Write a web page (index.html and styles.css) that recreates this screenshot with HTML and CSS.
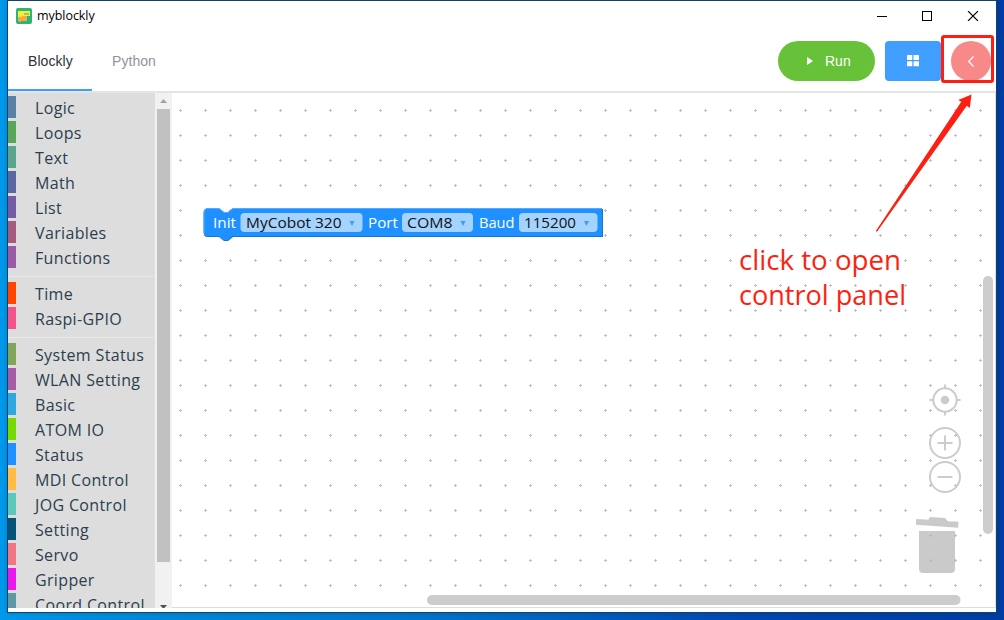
FILE: index.html
```html
<!DOCTYPE html>
<html lang="en">
<head>
<meta charset="utf-8">
<title>myblockly</title>
<link rel="stylesheet" href="styles.css">
</head>
<body>
<div class="desktop">
  <div class="window">
    <div class="titlebar">
      <svg class="app-icon" width="16" height="16" viewBox="0 0 16 16">
        <rect width="16" height="16" rx="2" fill="#2bb673"/>
        <path d="M2 8h9v5H5v1H3v-1H2z" fill="#f9a940"/>
        <path d="M2 3h12v5H7L5 9H2z" fill="#ffe936"/>
        <rect x="8" y="5" width="5" height="2" fill="#7cc8a0"/>
      </svg>
      <span class="app-name">myblockly</span>
      <svg class="controls" width="102" height="10" viewBox="0 0 102 10" fill="none" stroke="#000" shape-rendering="crispEdges">
        <path d="M0 5.5h10M45.500 .5h9v9h-9z"/>
        <path d="M91 0l10 10M101 0l-10 10" shape-rendering="auto" stroke-width="1.1"/>
      </svg>
    </div>
    <div class="header">
      <div class="tab tab-active">Blockly</div>
      <div class="tab">Python</div>
      <div class="actions">
        <div class="run"><svg width="6" height="8" viewBox="0 0 6 8"><path d="M0 0L6 4L0 8z" fill="#fff"/></svg><span>Run</span></div>
        <div class="grid-button"><svg width="12" height="12" viewBox="0 0 12 12" fill="#fff"><rect y="0" width="5.300" height="5" rx=".5"/><rect x="6.500" width="5.500" height="5" rx=".5"/><rect y="6.200" width="5.300" height="5" rx=".5"/><rect x="6.500" y="6.200" width="5.500" height="5" rx=".5"/></svg></div>
        <div class="panel-button"><svg width="6" height="11" viewBox="0 0 6 11"><path d="M5.500 .5L.7 5.500l4.800 5" fill="none" stroke="#fff" stroke-width="1.200"/></svg></div>
      </div>
    </div>
    <div class="main">
      <div class="toolbox">
        <div class="category logic">Logic</div>
        <div class="category loops">Loops</div>
        <div class="category text">Text</div>
        <div class="category math">Math</div>
        <div class="category list">List</div>
        <div class="category variables">Variables</div>
        <div class="category functions">Functions</div>
        <div class="separator"></div>
        <div class="category time">Time</div>
        <div class="category gpio">Raspi-GPIO</div>
        <div class="separator"></div>
        <div class="category system">System Status</div>
        <div class="category wlan">WLAN Setting</div>
        <div class="category basic">Basic</div>
        <div class="category atom">ATOM IO</div>
        <div class="category status">Status</div>
        <div class="category mdi">MDI Control</div>
        <div class="category jog">JOG Control</div>
        <div class="category setting">Setting</div>
        <div class="category servo">Servo</div>
        <div class="category gripper">Gripper</div>
        <div class="category coord">Coord Control</div>
      </div>
      <div class="scrollbar">
        <svg width="7" height="4" viewBox="0 0 7 4"><path d="M0 4L3.500 0L7 4z" fill="#a3a3a3"/></svg>
        <div class="thumb"></div>
        <svg class="down" width="7" height="4" viewBox="0 0 7 4"><path d="M0 0h7L3.500 4z" fill="#505050"/></svg>
      </div>
      <svg class="workspace" width="824" height="515" viewBox="172 93 824 515">
        <defs>
          <pattern id="dots" x="168" y="98" width="25" height="25" patternUnits="userSpaceOnUse">
            <path d="M11 12.500h3M12.500 11v3" stroke="#c0c0c0"/>
          </pattern>
        </defs>
        <rect x="172" y="93" width="823" height="514" fill="url(#dots)"/>
        <path d="M995.500 93v514.500H172" fill="none" stroke="#ddd"/>
        <g class="block">
          <path d="M204 213q0-4 4-4h11l5 4h4l5-4h370v28H233l-5 4h-4l-5-4h-11q-4 0-4-4z" fill="#1a73cc"/>
          <path d="M203.500 213q0-5 5-5H219l5 4h4l5-4h369v28H232.500l-5 4h-4l-5-4h-10.500q-4.500 0-4.500-4z" fill="#1e90ff"/>
          <path d="M204 233v-20q0-4.500 4.500-4.500h10.500l5 4h4l5-4h369" fill="none" stroke="#55abff"/>
          <g fill="#a5d3ff">
            <rect x="240.500" y="213" width="122" height="19" rx="4"/>
            <rect x="402" y="213" width="71" height="19" rx="4"/>
            <rect x="519" y="213" width="78.500" height="19" rx="4"/>
          </g>
          <g fill="#fff">
            <text x="213" y="228" textLength="23" lengthAdjust="spacingAndGlyphs">Init</text>
            <text x="368" y="228" textLength="30" lengthAdjust="spacingAndGlyphs">Port</text>
            <text x="479" y="228" textLength="35.500" lengthAdjust="spacingAndGlyphs">Baud</text>
          </g>
          <g fill="#111">
            <text x="246" y="228" textLength="95.500" lengthAdjust="spacingAndGlyphs">MyCobot 320</text>
            <text x="407" y="228" textLength="45.500" lengthAdjust="spacingAndGlyphs">COM8</text>
            <text x="524" y="228" textLength="52" lengthAdjust="spacingAndGlyphs">115200</text>
          </g>
          <path d="M349.500 221h5l-2.500 5zM460.500 221h5l-2.500 5zM584 221h5l-2.500 5z" fill="#3f9df5"/>
        </g>
        <g fill="none" stroke="#ccc" stroke-width="2">
          <circle cx="945" cy="400" r="11.700"/>
          <path d="M945 384.500v4M945 411.500v4M929.500 400h4M956.500 400h4"/>
          <circle cx="945" cy="443" r="15"/>
          <path d="M937.500 443h15M945 435.500v15"/>
          <circle cx="945" cy="477" r="15"/>
          <path d="M937.500 477h15"/>
        </g>
        <circle cx="945" cy="400" r="4.300" fill="#ccc"/>
        <path d="M919 531h36v38q0 4-4 4h-28q-4 0-4-4zM916.200 519l12 .7 2-2.700 15 1 2.500 3.200 10.800.6-.4 6-42.200-3z" fill="#b8b8b8" fill-opacity=".75"/>
        <rect x="983" y="276" width="10" height="258" rx="5" fill="#ccc"/>
        <rect x="427" y="595" width="533.500" height="10" rx="5" fill="#ccc"/>
      </svg>
    </div>
  </div>
  <svg class="annotation" width="1004" height="620" viewBox="0 0 1004 620">
    <rect x="942.500" y="36.500" width="50" height="45" rx="1.500" fill="none" stroke="#ff1f12" stroke-width="3"/>
    <path d="M971.500 94.500L969.800 108L966.800 105.800L877 231.800L875.800 231L961.300 101.800L958.300 100z" fill="#ff1f12"/>
    <g fill="#ff1f12">
      <text x="739" y="270" textLength="162" lengthAdjust="spacingAndGlyphs">click to open</text>
      <text x="739" y="305" textLength="167" lengthAdjust="spacingAndGlyphs">control panel</text>
    </g>
  </svg>
</div>
</body>
</html>
```
FILE: styles.css
```css
* { box-sizing: border-box; }
body { margin: 0; overflow: hidden; }
.desktop {
  position: relative;
  width: 1004px;
  height: 620px;
  padding: 1px 8px 8px 8px;
  background: linear-gradient(90deg, #0098ea 0, #008cda 100px, #0074ca 420px, #0047b0 750px, #003ca2 1004px);
}
.window {
  width: 988px;
  height: 611px;
  background: #fff;
  box-shadow: 0 0 0 1px #124468, 0 0 4px 1px rgba(0, 20, 60, .2);
}
.titlebar { display: flex; height: 29px; align-items: center; padding: 0 18px 0 8px; }
.app-name { margin-left: 5px; font: 12.5px "Open Sans", sans-serif; letter-spacing: -.05px; color: #000; }
.controls { margin-left: auto; margin-right: -1px; }
.header {
  display: flex;
  height: 63px;
  border-bottom: 2px solid #e4e4e4;
  font: 14px "Liberation Sans", Arial, sans-serif;
}
.tab { width: 84px; height: 61px; line-height: 62px; padding-left: 20px; letter-spacing: .05px; color: #909399; }
.tab-active { color: #303133; border-bottom: 2px solid #409eff; }
.actions { display: flex; margin-left: auto; padding: 11px 5px 0 0; }
.run {
  display: flex;
  width: 97px;
  height: 40px;
  padding-left: 29px;
  gap: 12px;
  align-items: center;
  border-radius: 20px;
  background: #67c23a;
  color: #fff;
}
.grid-button {
  display: flex;
  width: 56px;
  height: 40px;
  margin-left: 10px;
  align-items: center;
  justify-content: center;
  border-radius: 4px;
  background: #409eff;
}
.panel-button {
  display: flex;
  width: 40px;
  height: 40px;
  margin-left: 10px;
  padding-right: 1px;
  align-items: center;
  justify-content: center;
  border-radius: 50%;
  background: #f78989;
}
.main { display: flex; height: 515px; }
.toolbox { width: 147px; height: 515px; padding-top: 3px; overflow: hidden; background: #ddd; }
.category {
  height: 22px;
  margin-bottom: 3px;
  padding-left: 19px;
  border-left: 8px solid var(--color);
  font: 16px/25px "Open Sans", sans-serif;
  letter-spacing: .35px;
  white-space: nowrap;
  color: #2c3e50;
}
.separator { height: 1px; margin: 8px 0 5px; background: #e8e8e8; }
.logic { --color: #5b80a5; }
.loops { --color: #5ba55b; }
.text { --color: #5ba58c; }
.math { --color: #5b67a5; }
.list { --color: #745ba5; }
.variables { --color: #a55b80; }
.functions { --color: #995ba5; }
.time { --color: #ff4500; }
.gpio { --color: #f35588; }
.system { --color: #80a55b; }
.wlan { --color: #a55ba5; }
.basic { --color: #2fa8df; }
.atom { --color: #76d900; }
.status { --color: #1e90ff; }
.mdi { --color: #ffbb44; }
.jog { --color: #5bc8bb; }
.setting { --color: #045575; }
.servo { --color: #f07585; }
.gripper { --color: #ea18ea; }
.coord { --color: #5f99a5; }
.scrollbar {
  display: flex;
  width: 17px;
  height: 515px;
  padding-top: 6px;
  flex-direction: column;
  align-items: center;
  overflow: hidden;
  background: #f1f1f1;
}
.scrollbar svg { flex: none; }
.thumb { flex: none; width: 13px; height: 453px; margin-top: 6px; background: #c1c1c1; }
.down { margin-top: 43px; }
.workspace { display: block; flex: none; }
.block text { font: 15px "Open Sans", sans-serif; }
.annotation { position: absolute; left: 0; top: 0; }
.annotation text { font: 27px "Open Sans", sans-serif; }
```
